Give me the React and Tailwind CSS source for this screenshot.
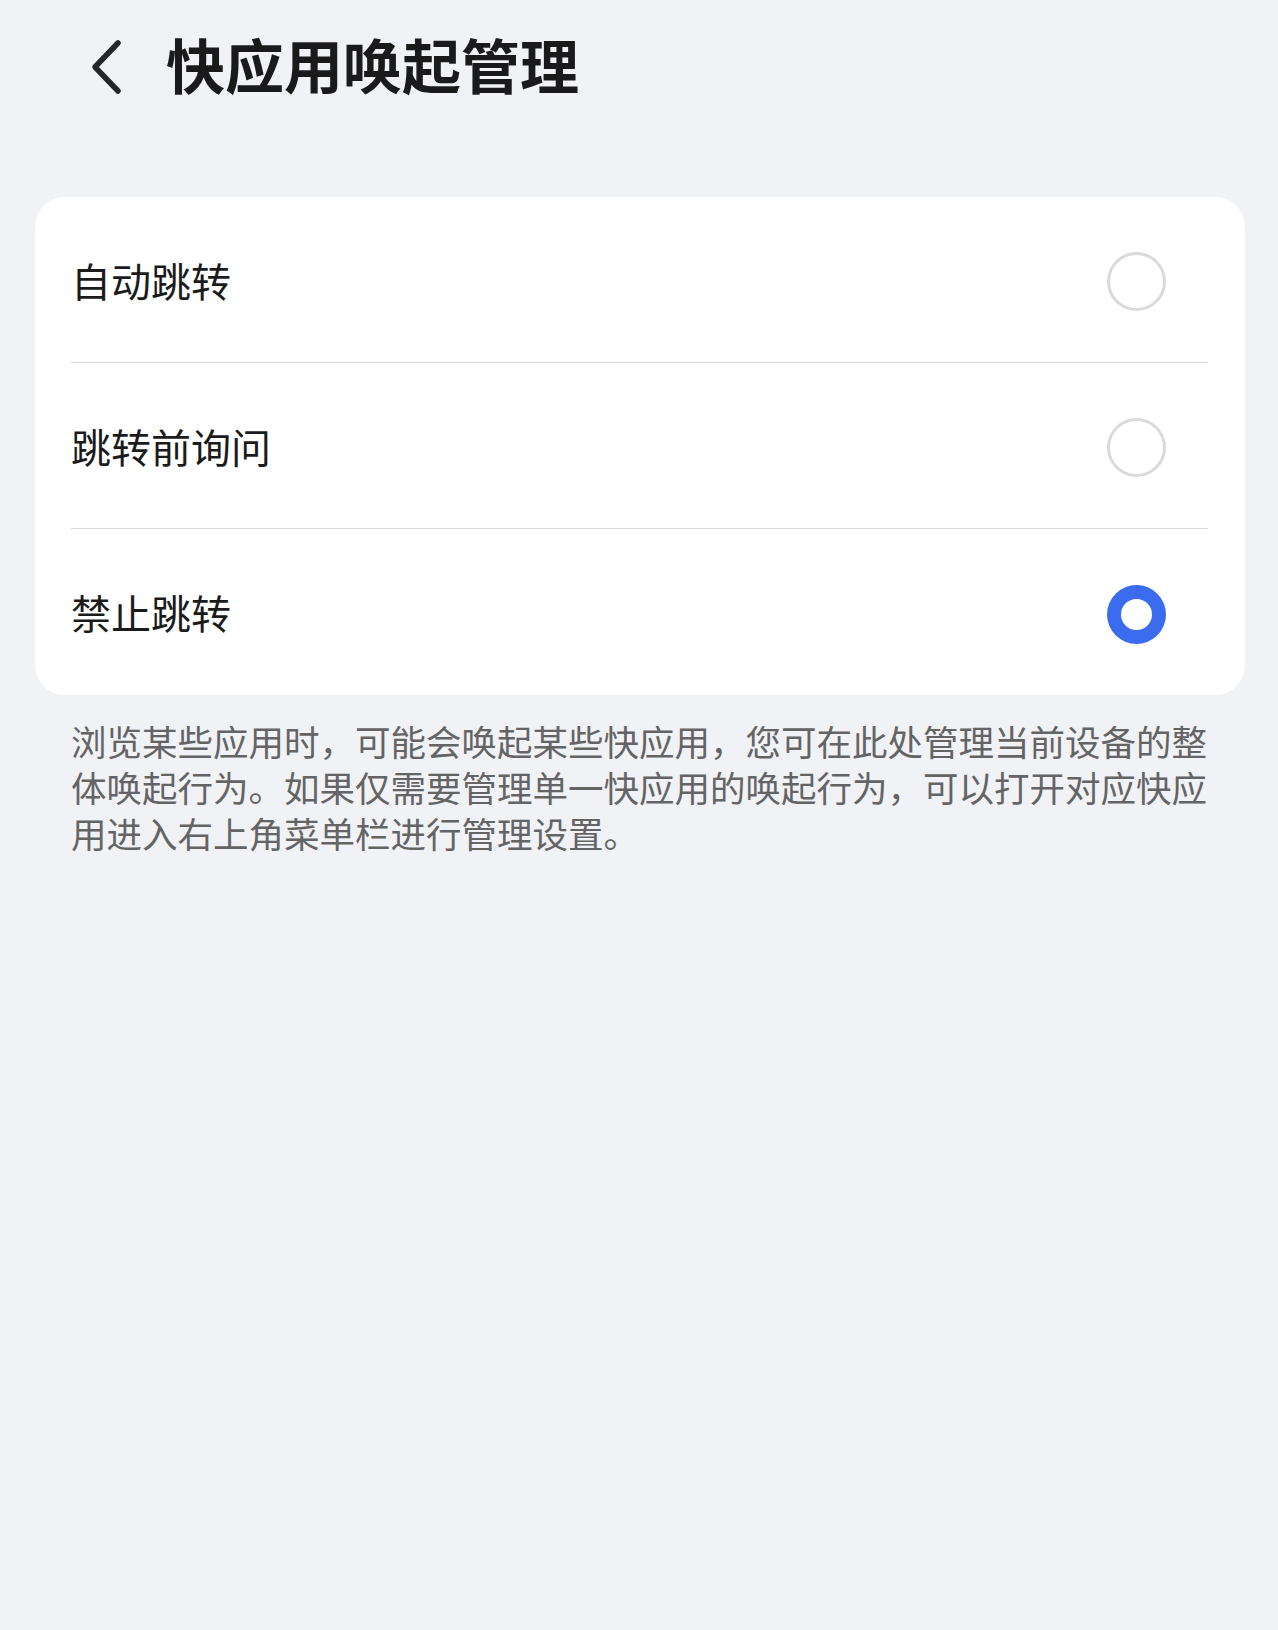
import React, { useState } from 'react';

const OPTIONS = ['自动跳转', '跳转前询问', '禁止跳转'];

function Radio({ checked }) {
    if (checked) {
        return (
            <div className="w-[59px] h-[59px] rounded-full bg-[#3b6cf0] flex items-center justify-center">
                <div className="w-[31px] h-[31px] rounded-full bg-white" />
            </div>
        );
    }
    return <div className="w-[59px] h-[59px] rounded-full border-[3px] border-[#dadada] bg-white" />;
}

export default function App() {
    const [selected, setSelected] = useState(2);

    return (
        <div className="min-h-[1630px] bg-[#f1f2f6] font-['Noto_Sans_CJK_SC',sans-serif]">
            <div className="h-[134px] flex items-center">
                <button className="ml-[87px] w-[38px] h-[60px] flex items-center justify-center">
                    <svg width="34" height="58" viewBox="0 0 34 58" fill="none">
                        <path d="M29 5 L6 29 L29 53" stroke="#262626" strokeWidth="5.5" strokeLinecap="round" strokeLinejoin="round" />
                    </svg>
                </button>
                <h1 className="ml-[41px] mb-[7px] text-[59px] leading-none font-bold text-[#1a1a1a]">快应用唤起管理</h1>
            </div>

            <div className="mt-[63px] ml-[35px] mr-[33px] bg-white rounded-[30px] pl-[36px] pr-[37px]">
                {OPTIONS.map((label, i) => (
                    <div
                        key={label}
                        onClick={() => setSelected(i)}
                        className={`h-[166px] flex items-center justify-between cursor-pointer ${i < OPTIONS.length - 1 ? 'border-b border-[#d9d9d9]' : ''}`}
                    >
                        <span className="text-[40px] leading-none text-[#1b1b1b]">{label}</span>
                        <div className="mr-[42px] pt-[4px]">
                            <Radio checked={selected === i} />
                        </div>
                    </div>
                ))}
            </div>

            <div className="mt-[23px] mx-[71px] text-[35.5px] leading-[46px] text-[#646464]">
                <p className="text-justify [text-align-last:justify]">浏览某些应用时，可能会唤起某些快应用，您可在此处管理当前设备的整</p>
                <p className="text-justify [text-align-last:justify]">体唤起行为。如果仅需要管理单一快应用的唤起行为，可以打开对应快应</p>
                <p>用进入右上角菜单栏进行管理设置。</p>
            </div>
        </div>
    );
}
